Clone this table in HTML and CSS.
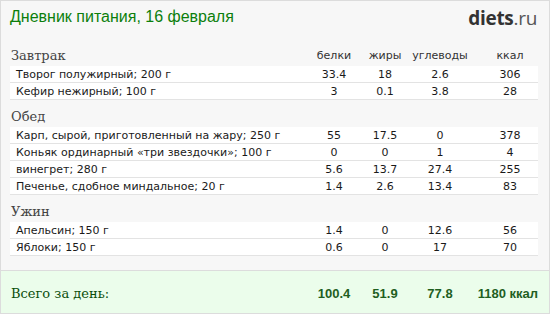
FILE: index.html
```
<!DOCTYPE html>
<html lang="ru">
<head>
<meta charset="utf-8">
<title>Дневник питания</title>
<link rel="stylesheet" href="styles.css">
</head>
<body>
<div class="diary">
  <div class="top">
    <h1 class="title">Дневник питания, 16 февраля</h1>
    <div class="logo"><span class="logo-main">diets</span><span class="logo-ru">.ru</span></div>
  </div>

  <div class="section">
    <div class="head">
      <div class="meal">Завтрак</div>
      <div class="col">белки</div>
      <div class="col">жиры</div>
      <div class="col">углеводы</div>
      <div class="col last">ккал</div>
    </div>
    <div class="row"><div class="name">Творог полужирный; 200 г</div><div class="col">33.4</div><div class="col">18</div><div class="col">2.6</div><div class="col last">306</div></div>
    <div class="row"><div class="name">Кефир нежирный; 100 г</div><div class="col">3</div><div class="col">0.1</div><div class="col">3.8</div><div class="col last">28</div></div>
  </div>

  <div class="section">
    <div class="head"><div class="meal">Обед</div></div>
    <div class="row"><div class="name">Карп, сырой, приготовленный на жару; 250 г</div><div class="col">55</div><div class="col">17.5</div><div class="col">0</div><div class="col last">378</div></div>
    <div class="row"><div class="name">Коньяк ординарный «три звездочки»; 100 г</div><div class="col">0</div><div class="col">0</div><div class="col">1</div><div class="col last">4</div></div>
    <div class="row"><div class="name">винегрет; 280 г</div><div class="col">5.6</div><div class="col">13.7</div><div class="col">27.4</div><div class="col last">255</div></div>
    <div class="row"><div class="name">Печенье, сдобное миндальное; 20 г</div><div class="col">1.4</div><div class="col">2.6</div><div class="col">13.4</div><div class="col last">83</div></div>
  </div>

  <div class="section">
    <div class="head"><div class="meal">Ужин</div></div>
    <div class="row"><div class="name">Апельсин; 150 г</div><div class="col">1.4</div><div class="col">0</div><div class="col">12.6</div><div class="col last">56</div></div>
    <div class="row"><div class="name">Яблоки; 150 г</div><div class="col">0.6</div><div class="col">0</div><div class="col">17</div><div class="col last">70</div></div>
  </div>

  <div class="total">
    <div class="total-label">Всего за день:</div>
    <div class="tcol">100.4</div>
    <div class="tcol">51.9</div>
    <div class="tcol">77.8</div>
    <div class="tcol tlast">1180 ккал</div>
  </div>
</div>
</body>
</html>
```
FILE: styles.css
```
html, body {
  margin: 0;
  padding: 0;
  background: #ffffff;
}

.diary {
  width: 550px;
  height: 314px;
  box-sizing: border-box;
  border: 1px solid #dcdcdc;
  background: #f7f7f7;
  display: flex;
  flex-direction: column;
  font-family: "DejaVu Sans", Verdana, sans-serif;
}

.top {
  display: flex;
  justify-content: space-between;
  align-items: flex-start;
  padding: 6px 12px 0 9px;
  height: 38px;
  box-sizing: border-box;
}

.title {
  margin: 0;
  font-family: "Liberation Sans", Arial, sans-serif;
  font-weight: normal;
  font-size: 16px;
  line-height: 20px;
  color: #0c7f0c;
}

.logo {
  font-family: "Open Sans", "Liberation Sans", sans-serif;
  font-size: 19px;
  line-height: 22px;
  letter-spacing: -0.3px;
}

.logo-main {
  font-weight: 700;
  color: #333333;
}

.logo-ru {
  font-weight: 400;
  color: #555555;
}

.section {
  margin: 6px 11px 0 9px;
}

.section:first-of-type {
  margin-top: 5px;
}

.head,
.row,
.total {
  display: grid;
  grid-template-columns: 1fr 50px 52px 58px 69px;
  align-items: center;
}

.head {
  height: 21px;
  font-size: 11px;
  color: #333333;
}

.meal {
  font-family: "DejaVu Serif", Georgia, serif;
  font-size: 13px;
  color: #444444;
  padding-left: 1px;
}

.row {
  height: 17px;
  box-sizing: border-box;
  background: #ffffff;
  border-bottom: 1px solid #e3e3e3;
  font-size: 11px;
  color: #1a1a1a;
}

.name {
  padding-left: 6px;
  white-space: nowrap;
}

.col {
  text-align: center;
}

.col.last {
  padding-left: 13px;
}

.total {
  margin-top: auto;
  height: 43px;
  box-sizing: border-box;
  border-top: 1px solid #dcdcdc;
  background: #ebfdeb;
  padding: 2px 11px 0 9px;
  font-family: "Liberation Sans", Arial, sans-serif;
  font-weight: bold;
  font-size: 13px;
  color: #1f5f1f;
}

.total-label {
  font-family: "DejaVu Serif", Georgia, serif;
  font-weight: normal;
  font-size: 13px;
  color: #0b4f0b;
  padding-left: 1px;
}

.tcol {
  text-align: center;
}

.tcol.tlast {
  text-align: right;
}
```
